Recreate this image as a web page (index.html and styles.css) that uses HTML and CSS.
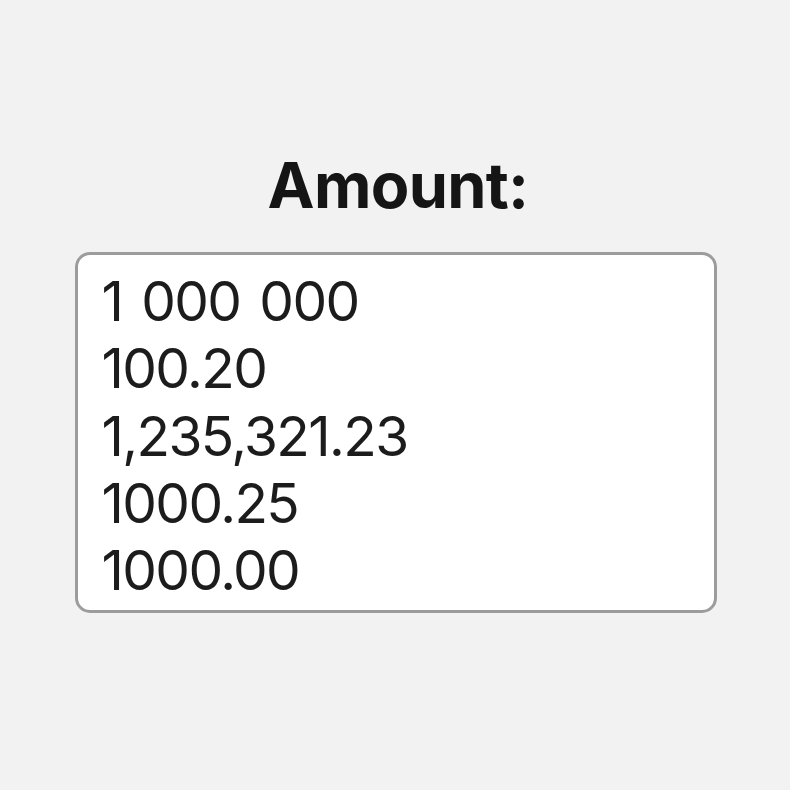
FILE: index.html
```html
<!DOCTYPE html>
<html lang="en">
<head>
<meta charset="utf-8">
<title>Amount</title>
<link rel="stylesheet" href="styles.css">
</head>
<body>
<main class="page">
  <h1 class="title">Amount:</h1>
  <div class="field">
    <div class="line">1 000 000</div>
    <div class="line">100.20</div>
    <div class="line">1,235,321.23</div>
    <div class="line">1000.25</div>
    <div class="line">1000.00</div>
  </div>
</main>
</body>
</html>
```
FILE: styles.css
```css
html, body {
  margin: 0;
  padding: 0;
  background: #f2f2f2;
}
body {
  width: 790px;
  height: 790px;
  font-family: Inter, "Noto Sans", "Liberation Sans", sans-serif;
  color: #1a1a1a;
}
.page {
  display: flex;
  flex-direction: column;
  align-items: center;
  padding-top: 148px;
}
.title {
  margin: 0 0 0 6px;
  font-size: 63px;
  font-weight: 700;
  line-height: 74px;
  color: #151515;
  letter-spacing: -0.7px;
}
.field {
  margin-top: 30px;
  box-sizing: border-box;
  width: 642px;
  height: 361px;
  margin-left: 1px;
  background: #ffffff;
  border: 3px solid #9c9c9c;
  border-radius: 15px;
  padding: 13px 0 0 24px;
  display: flex;
  flex-direction: column;
}
.line {
  font-size: 55px;
  line-height: 67.3px;
  font-weight: 400;
  color: #1c1c1c;
  letter-spacing: -1.6px;
  word-spacing: 5px;
}
```
